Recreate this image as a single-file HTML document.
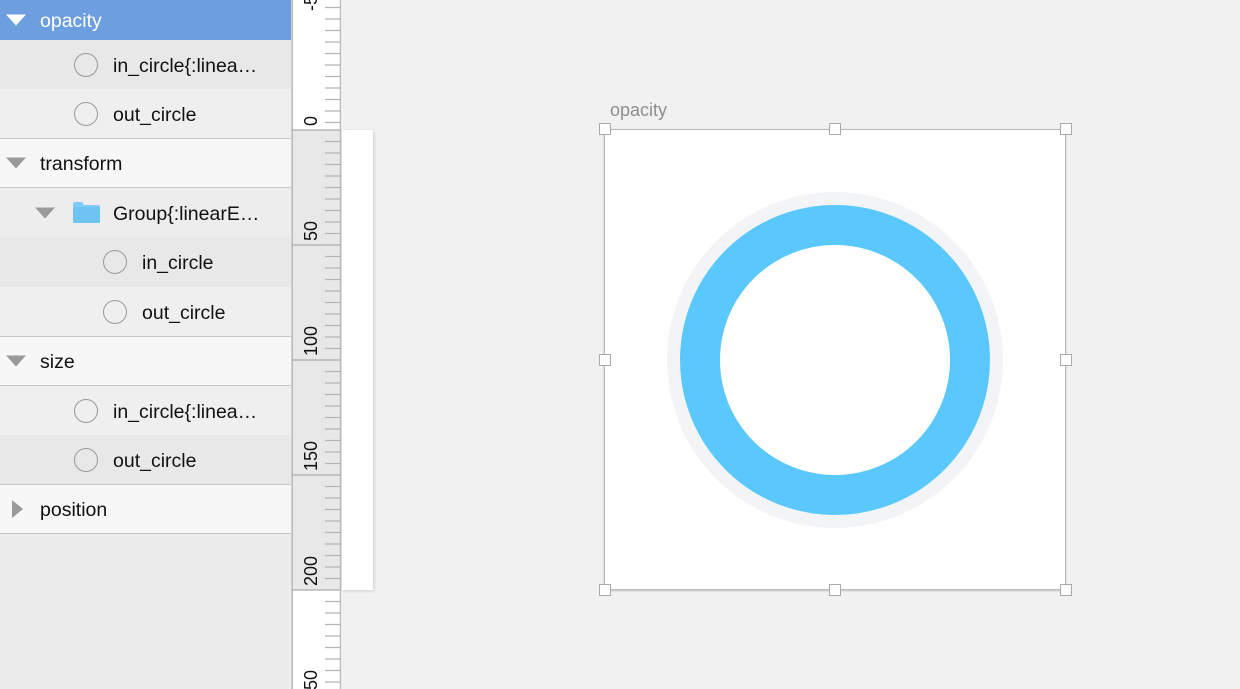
<!DOCTYPE html>
<html><head><style>
body{margin:0;width:1240px;height:689px;overflow:hidden;background:#f1f1f1;font-family:"Liberation Sans",sans-serif;position:relative}
.p{position:absolute;left:0;top:0;width:291px;height:689px;background:#ececec;border-right:1px solid #d0d0d0}
.r{position:absolute;left:0;width:291px;font-size:19.5px;color:#111;box-sizing:border-box}
.r span{position:absolute;top:50%;transform:translateY(-44%);white-space:nowrap}
.h{background:#f7f7f7;border-bottom:1px solid #c8c8c8}
.c{position:absolute;width:22px;height:22px;border:1.5px solid #999;border-radius:50%;top:50%;transform:translateY(-50%)}
.td{position:absolute;width:0;height:0;border-left:10px solid transparent;border-right:10px solid transparent;border-top:11px solid #9a9a9a;top:50%;transform:translateY(-50%)}
</style></head><body>
<div class="p">
<div class="r" style="top:0;height:40px;background:#6c9ee0;color:#fff"><div class="td" style="left:6px;border-top-color:#fff"></div><span style="left:40px">opacity</span></div>
<div class="r" style="top:40px;height:49px;background:#e8e8e8"><div class="c" style="left:74px"></div><span style="left:113px">in_circle{:linea…</span></div>
<div class="r" style="top:89px;height:50px;background:#efefef;border-bottom:1px solid #c8c8c8"><div class="c" style="left:74px"></div><span style="left:113px">out_circle</span></div>
<div class="r h" style="top:139px;height:49px"><div class="td" style="left:6px"></div><span style="left:40px">transform</span></div>
<div class="r" style="top:188px;height:49px;background:#ededed"><div class="td" style="left:35px"></div>
<svg style="position:absolute;left:72px;top:13px" width="29" height="23"><path d="M1 3 Q1 1 3 1 H10 L12 4 H26 Q28 4 28 6 V21 Q28 22 26 22 H3 Q1 22 1 20Z" fill="#7fcdf5"/><rect x="1" y="6" width="27" height="16" rx="1.5" fill="#6ec4f0"/></svg>
<span style="left:113px">Group{:linearE…</span></div>
<div class="r" style="top:237px;height:50px;background:#e8e8e8"><div class="c" style="left:103px"></div><span style="left:142px">in_circle</span></div>
<div class="r" style="top:287px;height:50px;background:#efefef;border-bottom:1px solid #c8c8c8"><div class="c" style="left:103px"></div><span style="left:142px">out_circle</span></div>
<div class="r h" style="top:337px;height:49px"><div class="td" style="left:6px"></div><span style="left:40px">size</span></div>
<div class="r" style="top:386px;height:49px;background:#efefef"><div class="c" style="left:74px"></div><span style="left:113px">in_circle{:linea…</span></div>
<div class="r" style="top:435px;height:50px;background:#e8e8e8;border-bottom:1px solid #c8c8c8"><div class="c" style="left:74px"></div><span style="left:113px">out_circle</span></div>
<div class="r h" style="top:485px;height:49px"><div style="position:absolute;left:12px;top:50%;transform:translateY(-50%);border-top:9px solid transparent;border-bottom:9px solid transparent;border-left:11px solid #9a9a9a"></div><span style="left:40px">position</span></div>
</div>
<div style="position:absolute;left:341px;top:130px;width:32px;height:460px;background:#fff;box-shadow:1px 1px 3px rgba(0,0,0,.15)"></div>
<svg style="position:absolute;left:292px;top:0" width="50" height="689">
<rect x="0" y="0" width="50" height="689" fill="#fff"/>
<rect x="0" y="130" width="50" height="460" fill="#e8e8e8"/>
<line x1="0.5" y1="0" x2="0.5" y2="689" stroke="#bbb"/>
<line x1="48.5" y1="0" x2="48.5" y2="689" stroke="#bbb" stroke-width="1.5"/>
<g font-size="18" fill="#111" font-family="Liberation Sans">
<text transform="translate(25,126) rotate(-90)">0</text>
<text transform="translate(25,241) rotate(-90)">50</text>
<text transform="translate(25,356) rotate(-90)">100</text>
<text transform="translate(25,471) rotate(-90)">150</text>
<text transform="translate(25,586) rotate(-90)">200</text>
<text transform="translate(25,700) rotate(-90)">250</text>
<text transform="translate(25,11) rotate(-90)">-50</text>
</g>
<g stroke="#b5b5b5" stroke-width="1.3">
<path d="M33 7.5H48M33 19H48M33 30.5H48M33 42H48M33 53.5H48M33 65H48M33 76.5H48M33 88H48M33 99.5H48M33 111H48M33 122.5H48"/>
<path d="M33 141.5H48M33 153H48M33 164.5H48M33 176H48M33 187.5H48M33 199H48M33 210.5H48M33 222H48M33 233.5H48"/>
<path d="M33 256.5H48M33 268H48M33 279.5H48M33 291H48M33 302.5H48M33 314H48M33 325.5H48M33 337H48M33 348.5H48"/>
<path d="M33 371.5H48M33 383H48M33 394.5H48M33 406H48M33 417.5H48M33 429H48M33 440.5H48M33 452H48M33 463.5H48"/>
<path d="M33 486.5H48M33 498H48M33 509.5H48M33 521H48M33 532.5H48M33 544H48M33 555.5H48M33 567H48M33 578.5H48"/>
<path d="M33 601.5H48M33 613H48M33 624.5H48M33 636H48M33 647.5H48M33 659H48M33 670.5H48M33 682H48"/>
<path d="M0 130H48M0 245H48M0 360H48M0 475H48M0 590H48" stroke="#aaa"/>
</g>
</svg>
<div style="position:absolute;left:610px;top:100px;font-size:18px;color:#8e8e8e">opacity</div>
<div style="position:absolute;left:604px;top:129px;width:462px;height:461px;background:#fff;border:1px solid #bbb;box-sizing:border-box;box-shadow:0 1px 2px rgba(0,0,0,.2)"></div>
<svg style="position:absolute;left:0;top:0" width="1240" height="689">
<circle cx="835" cy="360" r="161.5" fill="none" stroke="#f3f4f6" stroke-width="13"/>
<circle cx="835" cy="360" r="135" fill="none" stroke="#5ac8fc" stroke-width="40"/>
<g fill="#fff" stroke="#aaa" stroke-width="1">
<rect x="599.5" y="123.5" width="11" height="11"/><rect x="829.5" y="123.5" width="11" height="11"/><rect x="1060.5" y="123.5" width="11" height="11"/>
<rect x="599.5" y="354.5" width="11" height="11"/><rect x="1060.5" y="354.5" width="11" height="11"/>
<rect x="599.5" y="584.5" width="11" height="11"/><rect x="829.5" y="584.5" width="11" height="11"/><rect x="1060.5" y="584.5" width="11" height="11"/>
</g>
</svg>
</body></html>
